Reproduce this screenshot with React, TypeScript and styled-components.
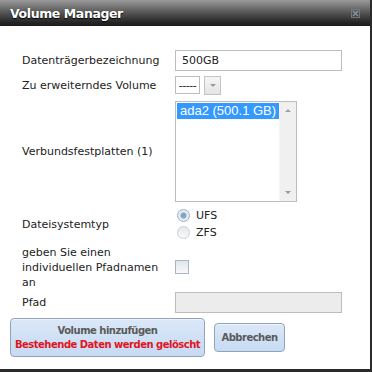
import * as React from 'react'
import styled, { createGlobalStyle } from 'styled-components'

const GlobalStyle = createGlobalStyle`
  html, body {
    margin: 0;
    padding: 0;
    background: #ffffff;
  }
`

const font = `'DejaVu Sans', Verdana, sans-serif`

const Dialog = styled.div`
  width: 372px;
  height: 372px;
  box-sizing: border-box;
  border-right: 2px solid #2b2b2b;
  border-bottom: 3px solid #2b2b2b;
  background: #fff;
  display: flex;
  flex-direction: column;
  font-family: ${font};
  font-size: 11px;
  color: #222;
`

const TitleBar = styled.div`
  height: 26px;
  flex: 0 0 26px;
  background: linear-gradient(#9a9a9a 0%, #5a5a5a 45%, #262626 85%, #1c1c1c 100%);
  display: flex;
  align-items: center;
  justify-content: space-between;
  padding: 0 10px 0 10px;
  box-sizing: border-box;
`

const Title = styled.span`
  color: #fff;
  font-weight: bold;
  font-size: 12.5px;
  text-shadow: 0 1px 1px #000;
  letter-spacing: -0.4px;
`

const CloseIcon = styled.span`
  width: 9px;
  height: 9px;
  display: flex;
`

const Form = styled.div`
  display: flex;
  flex-direction: column;
  padding: 0 28px 0 22px;
`

const Row = styled.div<{ $mt: number }>`
  display: flex;
  align-items: center;
  margin-top: ${p => p.$mt}px;
`

const Label = styled.div`
  width: 153px;
  flex: 0 0 153px;
  line-height: 15px;
`

const TextInput = styled.div<{ $disabled?: boolean }>`
  width: 167px;
  height: 21px;
  box-sizing: border-box;
  border: 1px solid #bdbdbd;
  background: ${p => (p.$disabled ? '#ececec' : '#fff')};
  padding: 0 6px;
  display: flex;
  align-items: center;
  font-size: 11px;
`

const SelectBox = styled.div`
  display: flex;
  gap: 4px;
`

const SelectValue = styled.div`
  width: 25px;
  height: 18px;
  box-sizing: border-box;
  border: 1px solid #bdbdbd;
  display: flex;
  align-items: center;
  justify-content: center;
  letter-spacing: -0.5px;
`

const SelectButton = styled.div`
  width: 17px;
  height: 19px;
  box-sizing: border-box;
  border: 1px solid #c4c4c4;
  background: linear-gradient(#f6f6f6, #e4e4e4);
  display: flex;
  align-items: center;
  justify-content: center;
`

const Arrow = styled.span<{ $up?: boolean }>`
  width: 0;
  height: 0;
  border-left: 3px solid transparent;
  border-right: 3px solid transparent;
  ${p => (p.$up ? 'border-bottom: 3px solid #a0a0a0;' : 'border-top: 3px solid #8d9cab;')}
`

const ListBox = styled.div`
  width: 122px;
  height: 101px;
  box-sizing: border-box;
  border: 1px solid #bdbdbd;
  display: flex;
`

const ListItems = styled.div`
  flex: 1;
  min-width: 0;
  padding: 1px 0 0 1px;
  font-family: 'Liberation Sans', Arial, sans-serif;
  font-size: 13px;
`

const ListItem = styled.div<{ $selected?: boolean }>`
  height: 16px;
  line-height: 16px;
  padding-left: 3px;
  white-space: nowrap;
  overflow: hidden;
  background: ${p => (p.$selected ? '#3399ff' : 'transparent')};
  color: ${p => (p.$selected ? '#fff' : '#222')};
`

const ScrollBar = styled.div`
  width: 16px;
  flex: 0 0 16px;
  background: #f0f0f0;
  border-left: 1px solid #f4f4f4;
  display: flex;
  flex-direction: column;
  justify-content: space-between;
  align-items: center;
  padding: 7px 0;
`

const RadioGroup = styled.div`
  display: flex;
  flex-direction: column;
`

const RadioOption = styled.label`
  display: flex;
  align-items: center;
  height: 17px;
  gap: 6px;
  padding-left: 2px;
`

const RadioCircle = styled.span<{ $checked?: boolean }>`
  width: 13px;
  height: 13px;
  box-sizing: border-box;
  border-radius: 50%;
  border: 1px solid ${p => (p.$checked ? '#9eb1c4' : '#c8cfd6')};
  background: ${p =>
    p.$checked
      ? 'radial-gradient(circle, #7f9fbf 0, #8aa7c4 2.5px, #dfe8f1 3.5px, #f2f5f8 100%)'
      : 'linear-gradient(#e6e9ec, #f8f9fa)'};
`

const Checkbox = styled.span`
  width: 14px;
  height: 14px;
  margin-top: -2px;
  box-sizing: border-box;
  border: 1px solid #a9b5c2;
  background: linear-gradient(#dfe5eb, #f7f9fb);
`

const Buttons = styled.div`
  display: flex;
  align-items: center;
  gap: 9px;
  padding-left: 10px;
  margin-top: 5px;
`

const Button = styled.div<{ $w: number; $h: number }>`
  width: ${p => p.$w}px;
  height: ${p => p.$h}px;
  box-sizing: border-box;
  border: 1px solid #8fa4bb;
  border-radius: 4px;
  background: linear-gradient(#dbe8f8, #c6daf2);
  box-shadow: inset 0 1px 0 #eef4fc;
  display: flex;
  flex-direction: column;
  align-items: center;
  justify-content: center;
  font-weight: bold;
  font-size: 10px;
  letter-spacing: -0.5px;
  line-height: 14px;
  white-space: nowrap;
  color: #5a5a5a;
`

const Warning = styled.span`
  color: #e0141e;
`

export default function App() {
  return (
    <>
      <GlobalStyle />
      <Dialog>
        <TitleBar>
          <Title>Volume Manager</Title>
          <CloseIcon>
            <svg width="9" height="9" viewBox="0 0 9 9">
              <rect x="0.5" y="0.5" width="8" height="8" fill="none" stroke="#6f7780" />
              <path d="M2 2 L7 7 M7 2 L2 7" stroke="#8a949e" strokeWidth="1.4" />
            </svg>
          </CloseIcon>
        </TitleBar>
        <Form>
          <Row $mt={24}>
            <Label>Datenträgerbezeichnung</Label>
            <TextInput>500GB</TextInput>
          </Row>
          <Row $mt={5}>
            <Label>Zu erweiterndes Volume</Label>
            <SelectBox>
              <SelectValue>-----</SelectValue>
              <SelectButton>
                <Arrow />
              </SelectButton>
            </SelectBox>
          </Row>
          <Row $mt={6}>
            <Label>Verbundsfestplatten (1)</Label>
            <ListBox>
              <ListItems>
                <ListItem $selected>ada2 (500.1 GB)</ListItem>
              </ListItems>
              <ScrollBar>
                <Arrow $up />
                <Arrow />
              </ScrollBar>
            </ListBox>
          </Row>
          <Row $mt={5}>
            <Label>Dateisystemtyp</Label>
            <RadioGroup>
              <RadioOption>
                <RadioCircle $checked />
                UFS
              </RadioOption>
              <RadioOption>
                <RadioCircle />
                ZFS
              </RadioOption>
            </RadioGroup>
          </Row>
          <Row $mt={4}>
            <Label>
              geben Sie einen
              <br />
              individuellen Pfadnamen
              <br />
              an
            </Label>
            <Checkbox />
          </Row>
          <Row $mt={2}>
            <Label>Pfad</Label>
            <TextInput $disabled />
          </Row>
        </Form>
        <Buttons>
          <Button $w={195} $h={39}>
            <span>Volume hinzufügen</span>
            <Warning>Bestehende Daten werden gelöscht</Warning>
          </Button>
          <Button $w={71} $h={29}>
            Abbrechen
          </Button>
        </Buttons>
      </Dialog>
    </>
  )
}
